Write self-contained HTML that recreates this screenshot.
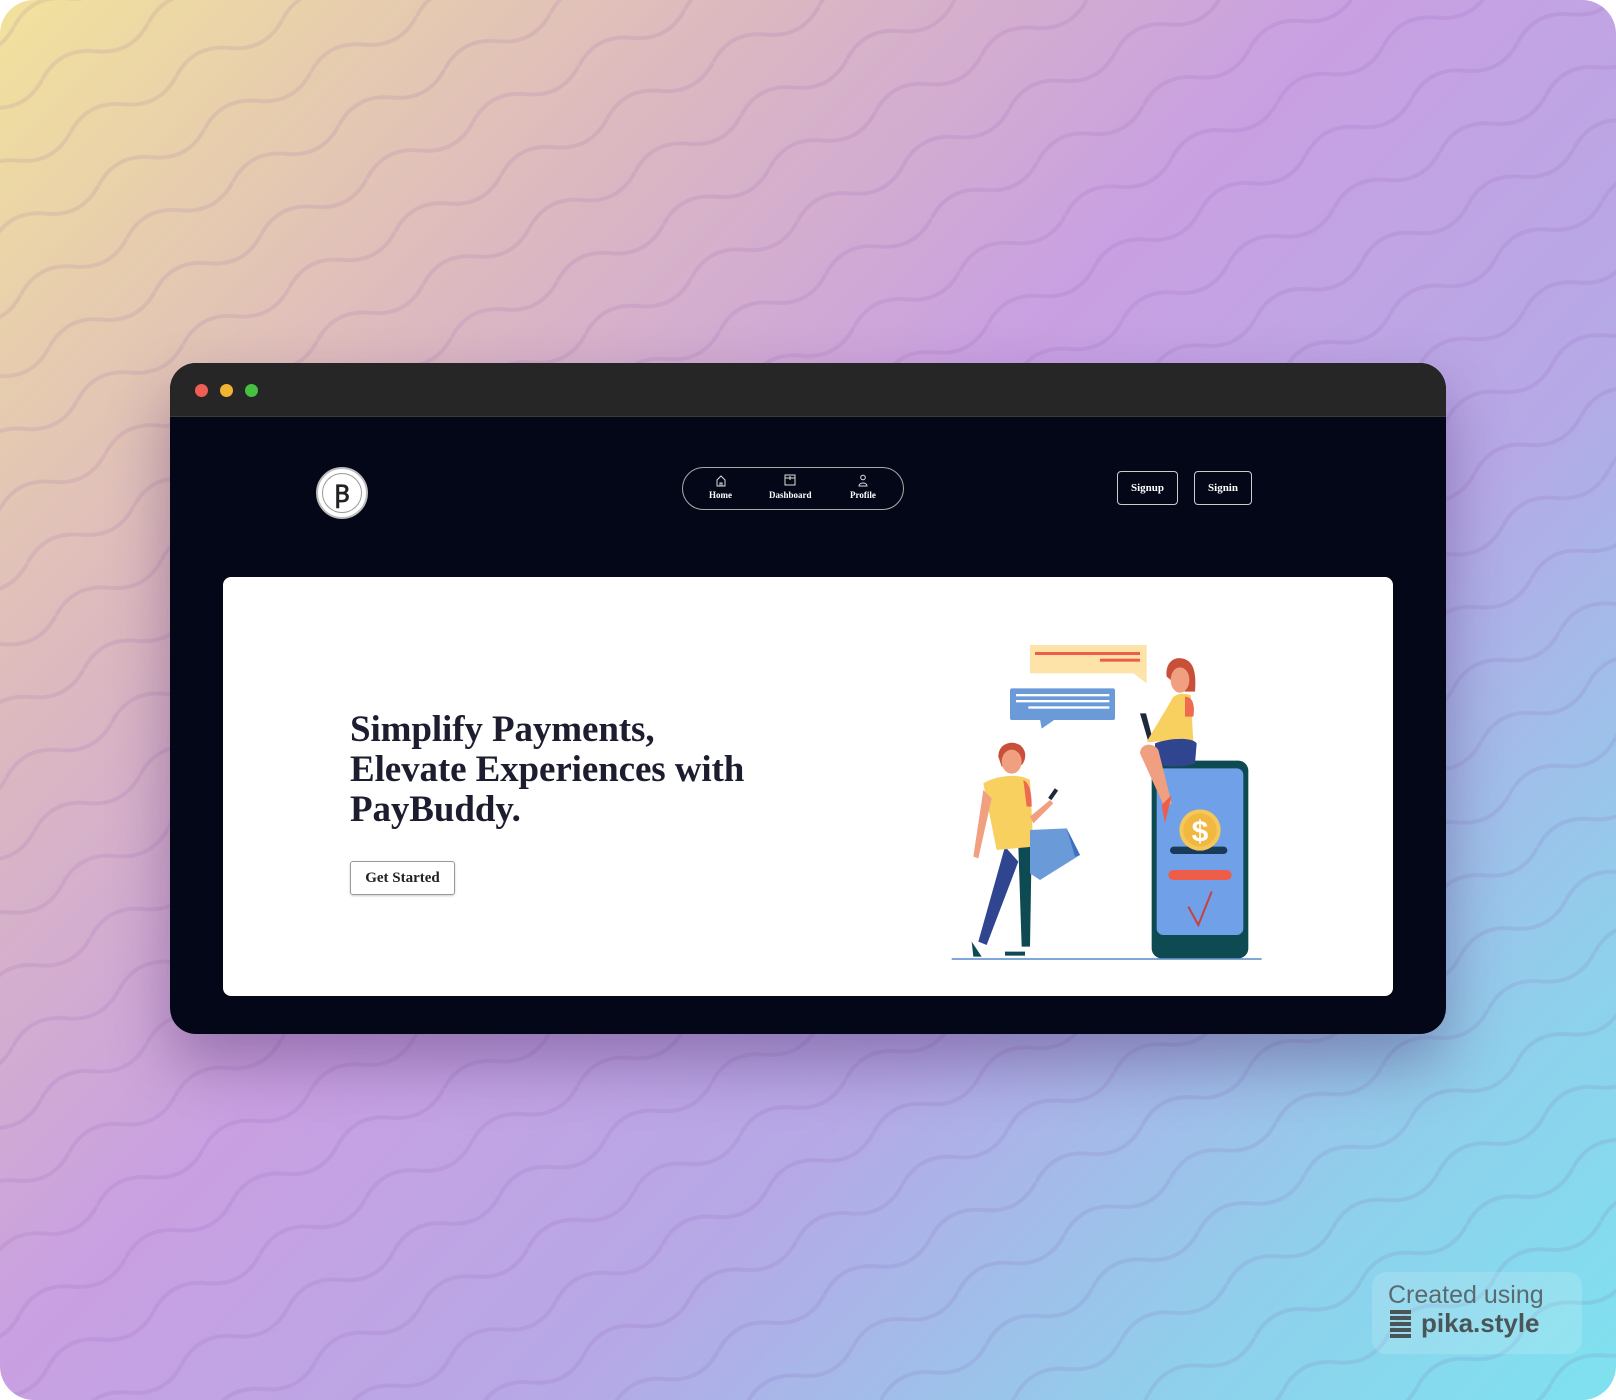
<!DOCTYPE html>
<html><head><meta charset="utf-8"><style>
*{margin:0;padding:0;box-sizing:border-box}
html,body{width:1616px;height:1400px;overflow:hidden;background:#fff}
.bg{position:absolute;left:0;top:0;width:1616px;height:1400px;border-radius:34px;overflow:hidden;
background:linear-gradient(135deg,#f2e29c 0%,#dcb8c0 25%,#c9a0e2 45%,#b6a8e6 65%,#8fd0ec 85%,#7ee2ef 100%)}
.win{position:absolute;left:170px;top:363px;width:1276px;height:671px;border-radius:26px;overflow:hidden;background:#040718;box-shadow:0 30px 60px rgba(60,30,90,.35)}
.bar{height:54px;background:#262626;border-bottom:1px solid #3a3a3a;position:relative}
.dot{position:absolute;top:21px;width:13px;height:13px;border-radius:50%}
.logo{position:absolute;left:146px;top:104px;width:52px;height:52px;border-radius:50%;background:#fff;border:2px solid #bbb;display:flex;align-items:center;justify-content:center}
.logo div{width:40px;height:40px;border-radius:50%;border:1.5px solid #999;display:flex;align-items:center;justify-content:center;font:600 24px "Liberation Serif",serif;color:#222}
.nav{position:absolute;left:512px;top:104px;width:222px;height:43px;border:1.5px solid #aaa;border-radius:22px}
.ni{position:absolute;top:6px;color:#fff;font:bold 9px "Liberation Serif",serif;text-align:center}
.ni svg{display:block;margin:0 auto 3px}
.btn{position:absolute;top:108px;height:34px;border:1.5px solid #ccc;border-radius:4px;color:#fff;font:bold 11px "Liberation Serif",serif;display:flex;align-items:center;justify-content:center}
.card{position:absolute;left:53px;top:214px;width:1170px;height:419px;background:#fff;border-radius:8px}
h1{position:absolute;left:127px;top:133px;font:bold 37px/40px "Liberation Serif",serif;color:#1c1d2e;letter-spacing:-0.1px;white-space:nowrap}
.gs{position:absolute;left:127px;top:284px;width:105px;height:34px;border:1.5px solid #999;border-radius:3px;font:bold 15px "Liberation Serif",serif;color:#222;display:flex;align-items:center;justify-content:center;box-shadow:0 1px 2px rgba(0,0,0,.2)}
.wm{position:absolute;left:1372px;top:1272px;width:210px;height:82px;background:rgba(255,255,255,.15);border-radius:14px}
</style></head><body>
<div class="bg">
<svg width="1616" height="1400" style="position:absolute;left:0;top:0;opacity:.1">
<defs><pattern id="w" width="120" height="60" patternUnits="userSpaceOnUse" patternTransform="rotate(-28)">
<path d="M0 30 Q30 10 60 30 T120 30" fill="none" stroke="#7a3fa0" stroke-width="4"/></pattern></defs>
<rect width="1616" height="1400" fill="url(#w)"/></svg>
</div>
<div class="win">
<div class="bar"><div class="dot" style="left:25px;background:#ee5e54"></div><div class="dot" style="left:50px;background:#f1b331"></div><div class="dot" style="left:75px;background:#46c041"></div></div>
<div class="logo"><div>Ꞵ</div></div>
<div class="nav">
<div class="ni" style="left:26px"><svg width="12" height="13" viewBox="0 0 12 13"><path d="M2 12V6L6 2l4 4v6zM5 12V9h2v3" fill="none" stroke="#ddd" stroke-width="1"/></svg>Home</div>
<div class="ni" style="left:86px"><svg width="12" height="13" viewBox="0 0 12 13"><rect x="1" y="1" width="10" height="10" fill="none" stroke="#ddd"/><path d="M6 2v4M1 4h10" stroke="#ddd"/></svg>Dashboard</div>
<div class="ni" style="left:167px"><svg width="12" height="13" viewBox="0 0 12 13"><circle cx="6" cy="3.5" r="2.3" fill="none" stroke="#ddd"/><path d="M2 12c0-4 8-4 8 0z" fill="none" stroke="#ddd"/></svg>Profile</div>
</div>
<div class="btn" style="left:947px;width:61px">Signup</div>
<div class="btn" style="left:1024px;width:58px">Signin</div>
<div class="card">
<h1>Simplify Payments,<br>Elevate Experiences with<br>PayBuddy.</h1>
<div class="gs">Get Started</div>
<svg style="position:absolute;left:717px;top:53px" width="340" height="340" viewBox="0 0 1020 1020">
<rect x="270" y="45" width="350" height="85" fill="#fde3a7"/><path d="M580 130h40v30z" fill="#fde3a7"/>
<rect x="285" y="66" width="315" height="9" fill="#ee5d4a"/><rect x="480" y="86" width="120" height="9" fill="#ee5d4a"/>
<rect x="210" y="175" width="315" height="95" rx="6" fill="#6a9ad8"/><path d="M300 268h45l-40 28z" fill="#6a9ad8"/>
<rect x="228" y="192" width="280" height="7" fill="#fff"/><rect x="228" y="210" width="280" height="7" fill="#fff"/><rect x="265" y="229" width="243" height="7" fill="#fff"/>
<line x1="35" y1="987" x2="965" y2="987" stroke="#7fa7d8" stroke-width="6"/>
<rect x="635" y="392" width="290" height="593" rx="30" fill="#0e4a52"/>
<rect x="650" y="415" width="260" height="500" rx="20" fill="#6fa0e8"/>
<rect x="690" y="650" width="172" height="22" rx="11" fill="#1a3a5a"/>
<circle cx="780" cy="600" r="62" fill="#f5c65a"/><circle cx="780" cy="600" r="50" fill="#f0b840"/>
<text x="780" y="635" font-family="Liberation Sans" font-weight="bold" font-size="90" fill="#fff" text-anchor="middle">$</text>
<rect x="685" y="720" width="190" height="30" rx="15" fill="#ee5d4a"/>
<polyline points="745,830 775,885 815,785" fill="none" stroke="#c94040" stroke-width="6"/>
<path d="M600 250l25 85h15l-22-85z" fill="#1c2a3a"/>
<path d="M620 335h140l-8 -140c-30-10-55 0-60 20z" fill="#f7d060"/>
<path d="M735 200c25 0 30 30 25 60l-25 0z" fill="#ee6a50"/>
<path d="M645 340c40-15 110-20 125 0l-5 60c-40 15-100 10-120 0z" fill="#2f4590"/>
<path d="M600 370c0-30 40-35 55-10l40 160-20 15z" fill="#f0a080"/>
<path d="M665 525l30-30-20 85z" fill="#ee5d4a"/>
<path d="M680 140c-5-40 20-60 45-55 35 5 45 40 40 100h-30z" fill="#c8503a"/>
<ellipse cx="720" cy="150" rx="28" ry="38" fill="#f0a080"/>
<path d="M195 650l-80 285 25 10 95-250z" fill="#2f4590"/>
<path d="M235 650l40 0-5 300-25 0z" fill="#0e4a52"/>
<path d="M175 650c-10 0 100 0 100 0l-10-40z" fill="#2f4590"/>
<path d="M130 460c40-25 110-30 140-10l10 200-110 10z" fill="#f7d060"/>
<path d="M250 450c20 10 25 40 25 80l-15 0z" fill="#ee6a50"/>
<path d="M130 480l-30 200 15 5 40-180z" fill="#f0a080"/>
<path d="M270 560l60-50 10 10-60 60z" fill="#f0a080"/>
<rect x="335" y="475" width="12" height="35" fill="#1c2a3a" transform="rotate(35 340 490)"/>
<path d="M270 600l110 -5 40 80-120 75-30 -20z" fill="#6a9ad8"/><path d="M380 595l40 80-15 5z" fill="#3f6fc0"/>
<path d="M95 935l30 45h-25z M195 965h60v12h-60z" fill="#0e4a52"/>
<path d="M175 380c0-40 40-50 65-35 25 20 15 50 5 60l-60 5z" fill="#c8503a"/>
<ellipse cx="215" cy="395" rx="30" ry="36" fill="#f0a080"/>
</svg>
</div>
</div>
<div class="wm"></div>
<div style="position:absolute;left:1388px;top:1281px;font:25px 'Liberation Sans',sans-serif;color:#5a6a70">Created using</div>
<div style="position:absolute;left:1390px;top:1310px;width:21px;height:29px;background:repeating-linear-gradient(#4a5558 0 4px,transparent 4px 6px)"></div>
<div style="position:absolute;left:1421px;top:1308px;font:bold 26px 'Liberation Sans',sans-serif;color:#4a5558">pika.style</div>
</body></html>
